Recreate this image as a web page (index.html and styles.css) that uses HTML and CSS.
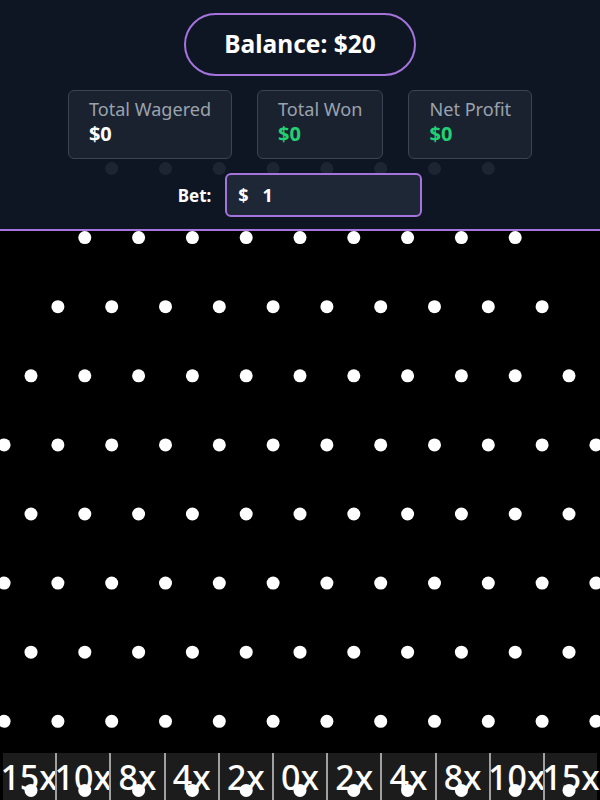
FILE: index.html
```html
<!DOCTYPE html>
<html lang="en">
<head>
  <meta charset="UTF-8">
  <meta name="viewport" content="width=device-width, initial-scale=1.0">
  <title>Plinko</title>
  <link rel="stylesheet" href="styles.css">
</head>
<body>
  <div class="app">
    <header class="top">
      <div class="balance">Balance: $20</div>
      <div class="stats">
        <div class="stat">
          <div class="stat-label">Total Wagered</div>
          <div class="stat-value">$0</div>
        </div>
        <div class="stat">
          <div class="stat-label">Total Won</div>
          <div class="stat-value green">$0</div>
        </div>
        <div class="stat">
          <div class="stat-label">Net Profit</div>
          <div class="stat-value green">$0</div>
        </div>
      </div>
      <div class="bet-row">
        <label class="bet-label" for="betInput">Bet:</label>
        <div class="bet-input">
          <span class="currency">$</span>
          <input id="betInput" type="text" value="1">
        </div>
      </div>
    </header>
    <div class="board">
      <svg id="pegs" class="pegs" viewBox="0 159 600 641"></svg>
      <div class="slots">
        <div class="slot">15x</div>
        <div class="slot">10x</div>
        <div class="slot">8x</div>
        <div class="slot">4x</div>
        <div class="slot">2x</div>
        <div class="slot">0x</div>
        <div class="slot">2x</div>
        <div class="slot">4x</div>
        <div class="slot">8x</div>
        <div class="slot">10x</div>
        <div class="slot">15x</div>
      </div>
    </div>
  </div>
  <script>
    const svg = document.getElementById('pegs');
    // peg count per row, top row sits behind the header
    const rows = [8, 9, 10, 11, 12, 11, 12, 11, 12, 11];
    const gapX = 53.8;
    const gapY = 69.1;
    rows.forEach((n, r) => {
      const y = 168.5 + r * gapY;
      for (let i = 0; i < n; i++) {
        const x = 300 + (i - (n - 1) / 2) * gapX;
        const peg = document.createElementNS('http://www.w3.org/2000/svg', 'circle');
        peg.setAttribute('cx', x.toFixed(1));
        peg.setAttribute('cy', y.toFixed(1));
        peg.setAttribute('r', '6.5');
        peg.setAttribute('fill', '#fff');
        svg.appendChild(peg);
      }
    });
  </script>
</body>
</html>
```

FILE: styles.css
```css
body {
  margin: 0;
  background: #000;
  font-family: "Noto Sans", "Open Sans", sans-serif;
  color: #fff;
}
.app {
  height: 800px;
  display: flex;
  flex-direction: column;
  overflow: hidden;
}
.top {
  position: relative;
  z-index: 2;
  background: rgba(16, 23, 37, 0.94);
  border-bottom: 2px solid #a473dc;
  padding: 13px 0 12px;
  display: flex;
  flex-direction: column;
  align-items: center;
  gap: 14px;
}
.balance {
  border: 2px solid #a473dc;
  border-radius: 40px;
  padding: 13px 38px 14px;
  font-size: 24.5px;
  font-weight: 700;
  line-height: 32px;
}
.stats {
  display: flex;
  gap: 25px;
}
.stat {
  background: #1a2230;
  border: 1px solid #3b4452;
  border-radius: 6px;
  padding: 6px 20px 11px;
}
.stat-label {
  font-size: 18.1px;
  line-height: 24px;
  color: #9aa2ad;
}
.stat-value {
  font-size: 20px;
  line-height: 26px;
  font-weight: 700;
}
.stat-value.green {
  color: #22d172;
}
.bet-row {
  display: flex;
  align-items: center;
  gap: 14px;
}
.bet-label {
  font-size: 17px;
  font-weight: 700;
}
.bet-input {
  box-sizing: content-box;
  width: 182px;
  height: 40px;
  border: 2px solid #a473dc;
  border-radius: 6px;
  background: #1e2736;
  display: flex;
  align-items: center;
  padding-left: 11px;
}
.currency {
  font-size: 18px;
  font-weight: 700;
  margin-right: 14px;
}
.bet-input input {
  flex: 1;
  min-width: 0;
  background: none;
  border: none;
  outline: none;
  color: #fff;
  font-family: inherit;
  font-size: 18px;
  font-weight: 700;
  padding: 0;
}
.board {
  flex: 1;
  margin-top: -72px;
  display: flex;
  flex-direction: column;
  justify-content: flex-end;
}
.pegs {
  position: absolute;
  z-index: 1;
  left: 0;
  top: 159px;
  width: 600px;
  height: 641px;
}
.slots {
  display: flex;
  padding: 0 3px;
  height: 47px;
}
.slot {
  flex: 1;
  min-width: 0;
  display: flex;
  align-items: center;
  justify-content: center;
  background: #1c1c1c;
  font-size: 34px;
  font-weight: 500;
  white-space: nowrap;
}
.slot + .slot {
  border-left: 2px solid #a0a0a0;
}
```
